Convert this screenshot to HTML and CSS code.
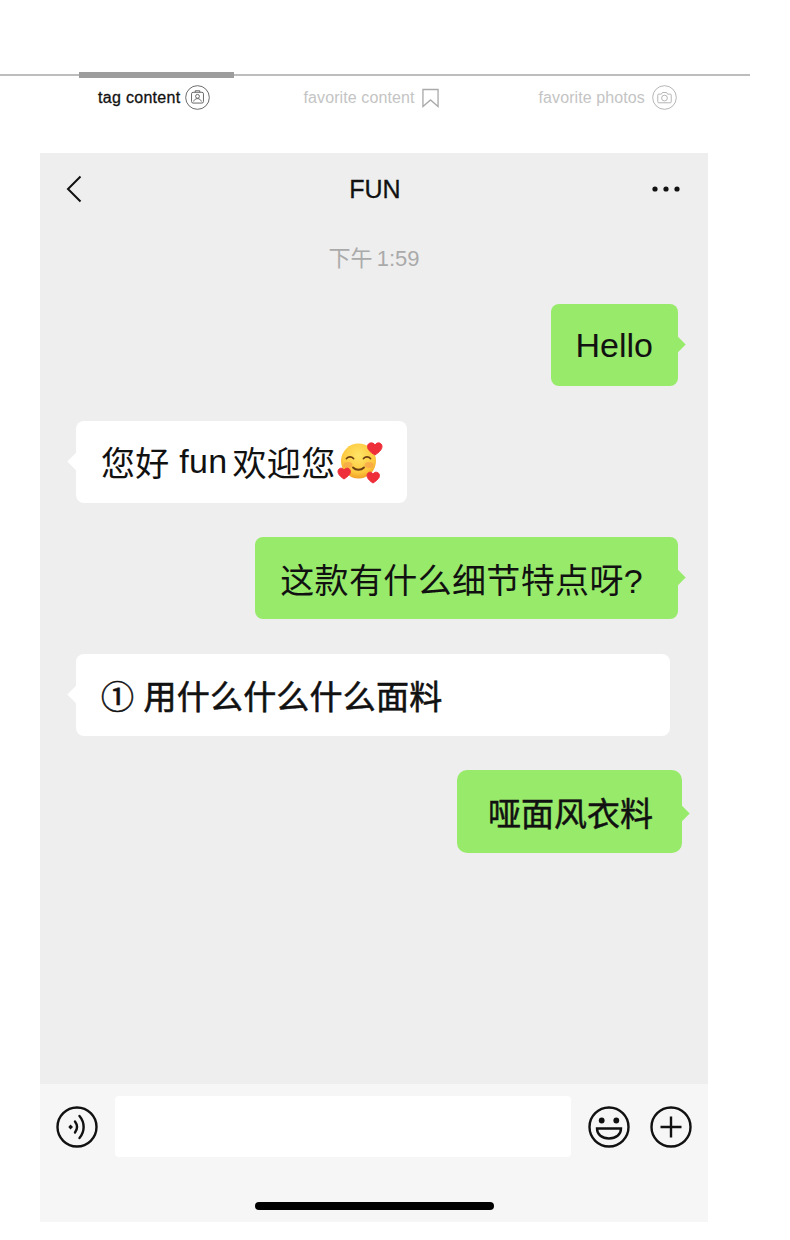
FILE: index.html
```html
<!DOCTYPE html>
<html lang="zh">

<head>
    <meta charset="UTF-8" />
    <meta name="viewport" content="width=device-width, initial-scale=1.0" />
    <title>Chat</title>
    <link rel="stylesheet" href="styles.css">
</head>

<body>
    <div class="tabs">
        <div class="tabs-line">
            <span class="tabs-indicator"></span>
        </div>
        <div class="tabs-row">
            <div class="tab tab-active">
                <span>tag content</span>
                <svg class="tab-icon" viewBox="0 0 26 26" fill="none" stroke="#555" stroke-width="0.9">
                    <circle cx="13" cy="13" r="12.3" />
                    <rect x="6.8" y="7.6" width="12.4" height="11.2" rx="1.6" />
                    <path d="M10.6 7.6v-1.6h4.8v1.6" />
                    <circle cx="13" cy="11.8" r="2" />
                    <path d="M9 17.2c.6-2.2 2.2-3 4-3s3.400.8 4 3" />
                </svg>
            </div>
            <div class="tab">
                <span>favorite content</span>
                <svg class="tab-bookmark" viewBox="0 0 18 20" fill="none" stroke="#aaa" stroke-width="1.4">
                    <path d="M1 1h16v18l-8-7-8 7z" />
                </svg>
            </div>
            <div class="tab tab-last">
                <span>favorite photos</span>
                <svg class="tab-icon tab-icon-far" viewBox="0 0 26 26" fill="none" stroke="#aaa" stroke-width="0.9">
                    <circle cx="13" cy="13" r="12.3" />
                    <path d="M7 9.500h2.800l1-1.700h4.400l1 1.700h2.800a1 1 0 0 1 1 1v7a1 1 0 0 1-1 1h-12a1 1 0 0 1-1-1v-7a1 1 0 0 1 1-1z" />
                    <circle cx="13" cy="13.600" r="3" />
                </svg>
            </div>
        </div>
    </div>

    <div class="phone">
        <header class="chat-header">
            <svg class="back" viewBox="0 0 16 28" fill="none" stroke="#111" stroke-width="2">
                <path d="M14.500 1.500L2 14l12.500 12.500" />
            </svg>
            <h1>FUN</h1>
            <svg class="more" viewBox="0 0 28 6" fill="#111">
                <circle cx="3" cy="3" r="2.600" />
                <circle cx="14" cy="3" r="2.600" />
                <circle cx="25" cy="3" r="2.600" />
            </svg>
        </header>

        <p class="time">下午 1:59</p>

        <div class="messages">
            <div class="bubble me">Hello</div>
            <div class="bubble them bubble-greeting">您好 <span class="latin">fun</span>欢迎您<svg class="emoji" viewBox="0 0 44 44">
                    <defs>
                        <radialGradient id="face" cx="50%" cy="35%" r="68%">
                            <stop offset="0" stop-color="#ffe566" />
                            <stop offset="0.7" stop-color="#fdc83e" />
                            <stop offset="1" stop-color="#f09a22" />
                        </radialGradient>
                    </defs>
                    <circle cx="20.500" cy="21" r="17.500" fill="url(#face)" />
                    <ellipse cx="10" cy="25" rx="4.500" ry="3" fill="#f59a4a" opacity="0.6" />
                    <ellipse cx="31" cy="25" rx="4.500" ry="3" fill="#f59a4a" opacity="0.6" />
                    <g fill="none" stroke="#6b3d12" stroke-width="1.800" stroke-linecap="round">
                        <path d="M8.500 18.500c2-2.200 5-2.200 7 0" />
                        <path d="M25.500 18.500c2-2.200 5-2.200 7 0" />
                        <path d="M15 27.500c3 3 8 3 11 0" />
                    </g>
                    <g fill="#ee2f3a" stroke="#ee2f3a" stroke-width="1" stroke-linejoin="round">
                        <path d="M37 15c-5-3-7.500-5.500-7.500-8.500 0-4 5.500-5 7.500-1.500 2-3.500 7-2.500 7 1.500 0 3-2.500 5.500-7 8.500z" />
                        <path d="M6 39c-4-2.500-6-5-6-7.500 0-3.600 4.500-4.500 6-1.500 1.500-3 6.500-2.100 6.500 1.500 0 2.500-2.500 5-6.500 7.500z" />
                        <path d="M35 43c-4-2.500-6-5-6-7.500 0-3.600 4.500-4.500 6-1.500 1.500-3 6.500-2.100 6.500 1.500 0 2.500-2.500 5-6.500 7.500z" />
                    </g>
                </svg></div>
            <div class="bubble me bubble-question">这款有什么细节特点呀?</div>
            <div class="bubble them bubble-wide">① 用什么什么什么面料</div>
            <div class="bubble me bubble-last">哑面风衣料</div>
        </div>

        <div class="input-bar">
            <div class="input-row">
                <svg class="bar-icon" viewBox="0 0 42 42" fill="none" stroke="#111" stroke-width="2.400">
                    <circle cx="21" cy="21" r="19.500" />
                    <path d="M19 15.500c2.600 3.500 2.600 7.500 0 11" stroke-linecap="round" />
                    <path d="M23.500 10c5.500 6.500 5.500 15.500 0 22" stroke-linecap="round" />
                    <path d="M14.500 18.500l2.500 2.500-2.500 2.500-2.200-2.500z" fill="#111" stroke="none" />
                </svg>
                <div class="input-box"></div>
                <svg class="bar-icon" viewBox="0 0 42 42" fill="none" stroke="#111" stroke-width="2.400">
                    <circle cx="21" cy="21" r="19.500" />
                    <circle cx="13.700" cy="14.500" r="2.900" fill="#111" stroke="none" />
                    <circle cx="28.300" cy="14.500" r="2.900" fill="#111" stroke="none" />
                    <path d="M9 22.500h24c0 6-5 10-12 10s-12-4-12-10z" />
                </svg>
                <svg class="bar-icon plus" viewBox="0 0 42 42" fill="none" stroke="#111" stroke-width="2.400">
                    <circle cx="21" cy="21" r="19.500" />
                    <path d="M10.500 21h21M21 10.500v21" />
                </svg>
            </div>
            <div class="home-indicator"></div>
        </div>
    </div>
</body>

</html>
```

FILE: styles.css
```css
* {
    margin: 0;
    padding: 0;
    box-sizing: border-box;
}

body {
    width: 790px;
    height: 1240px;
    background-color: #fff;
    font-family: "Liberation Sans", "Noto Sans CJK SC", sans-serif;
    color: #111;
    overflow: hidden;
}

.tabs {
    height: 153px;
    padding-top: 74px;
}

.tabs-line {
    position: relative;
    width: 750px;
    height: 2px;
    background-color: #bdbdbd;
}

.tabs-indicator {
    position: absolute;
    left: 79px;
    top: -2px;
    width: 155px;
    height: 6px;
    background-color: #9d9d9d;
}

.tabs-row {
    display: flex;
    align-items: center;
    gap: 93px;
    margin-top: 9px;
    padding-left: 98px;
}

.tab {
    display: flex;
    align-items: center;
    gap: 5px;
    height: 25px;
    font-size: 16px;
    letter-spacing: 0.1px;
    color: #c4c4c4;
}

.tab-active {
    color: #111;
    letter-spacing: 0.3px;
    -webkit-text-stroke: 0.3px #111;
}

.tab-last {
    margin-left: 6px;
}

.tab-icon {
    width: 25px;
    height: 25px;
}

.tab-icon-far {
    margin-left: 2px;
}

.tab-bookmark {
    width: 17px;
    height: 20px;
    margin-left: 3px;
}

.phone {
    display: flex;
    flex-direction: column;
    width: 668px;
    height: 1069px;
    margin-left: 40px;
    background-color: #eee;
}

.chat-header {
    display: grid;
    grid-template-columns: 1fr auto 1fr;
    align-items: center;
    height: 72px;
    padding: 0 28px 0 30px;
}

.chat-header h1 {
    font-size: 25px;
    font-weight: normal;
    -webkit-text-stroke: 0.3px #111;
}

.back {
    width: 16px;
    height: 28px;
    margin-left: -4px;
}

.more {
    width: 28px;
    height: 6px;
    justify-self: end;
}

.time {
    margin-top: 21px;
    font-size: 22px;
    line-height: 26px;
    word-spacing: -2px;
    text-align: center;
    color: #aaa;
}

.messages {
    flex: 1;
    display: flex;
    flex-direction: column;
    gap: 34.5px;
    padding-top: 32px;
}

.bubble {
    position: relative;
    display: flex;
    align-items: center;
    height: 82px;
    padding: 0 25px;
    border-radius: 8px;
    font-size: 34px;
    white-space: pre;
}

.bubble::after {
    content: "";
    position: absolute;
    top: 34px;
    width: 13px;
    height: 13px;
    transform: rotate(45deg);
    background-color: inherit;
}

.me {
    align-self: flex-end;
    margin-right: 30px;
    background-color: #98ea6b;
}

.me::after {
    right: -5px;
}

.them {
    align-self: flex-start;
    margin-left: 36px;
    background-color: #fff;
}

.them::after {
    left: -6px;
}

.bubble-greeting {
    letter-spacing: 0.3px;
}

.latin {
    margin-right: 5px;
}

.bubble-question {
    padding-right: 35px;
    letter-spacing: 0.35px;
}

.bubble-wide {
    width: 594px;
    font-size: 33px;
    letter-spacing: 0.2px;
    -webkit-text-stroke: 0.6px #111;
}

.bubble-last {
    width: 225px;
    height: 83px;
    margin-right: 26px;
    padding: 0 29px 0 31px;
    font-size: 33px;
    border-radius: 10px;
    -webkit-text-stroke: 0.5px #111;
}

.bubble-last::after {
    top: 37px;
}

.emoji {
    width: 44px;
    height: 44px;
    margin-left: 3px;
    overflow: visible;
}

.input-bar {
    height: 138px;
    padding-top: 12px;
    background-color: #f6f6f6;
}

.input-row {
    display: flex;
    align-items: center;
    gap: 17px;
    height: 61px;
    padding-left: 16px;
}

.bar-icon {
    flex: none;
    width: 42px;
    height: 42px;
}

.plus {
    margin-left: 3px;
}

.input-box {
    width: 456px;
    height: 61px;
    border-radius: 4px;
    background-color: #fff;
}

.home-indicator {
    width: 239px;
    height: 8px;
    margin: 45px auto 0;
    border-radius: 4px;
    background-color: #000;
}
```
